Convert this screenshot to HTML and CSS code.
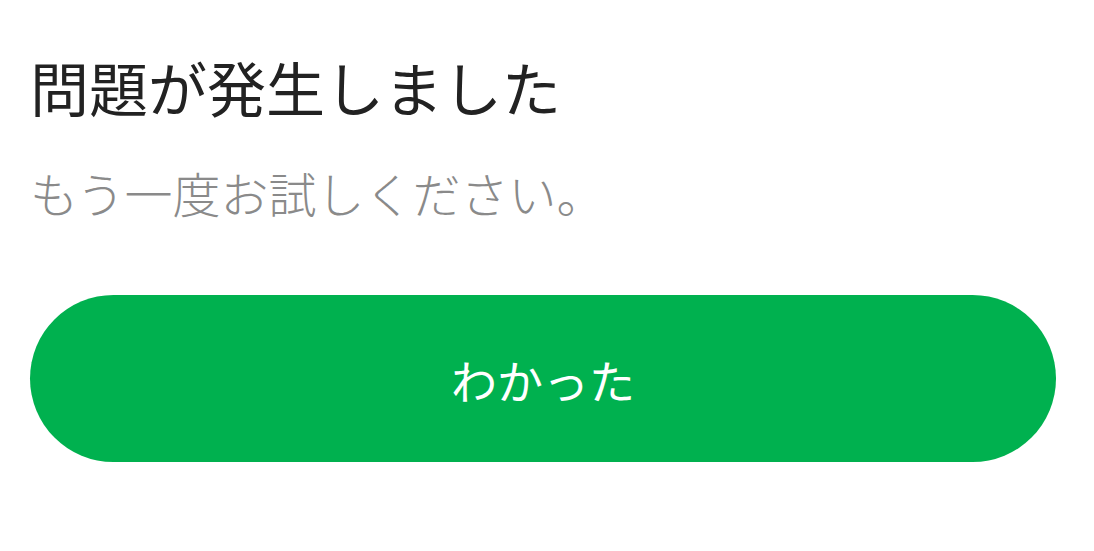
FILE: index.html
```html
<!DOCTYPE html>
<html lang="ja">
<head>
<meta charset="utf-8">
<link rel="stylesheet" href="styles.css">
</head>
<body>
<div class="dialog">
  <h1 class="title">問題が発生しました</h1>
  <p class="message">もう一度お試しください。</p>
  <button class="ok">わかった</button>
</div>
</body>
</html>
```
FILE: styles.css
```css
html, body {
  margin: 0;
  padding: 0;
  background: #ffffff;
}
body {
  font-family: "Noto Sans CJK JP", "Noto Sans", sans-serif;
}
.dialog {
  padding: 57px 38px 0 30px;
  display: flex;
  flex-direction: column;
}
.title {
  margin: 0;
  font-size: 59px;
  line-height: 59px;
  font-weight: 400;
  color: #222222;
}
.message {
  margin: 52px 0 0 0;
  font-size: 48px;
  line-height: 48px;
  font-weight: 300;
  color: #8a8a8a;
}
.ok {
  margin-top: 79px;
  height: 167px;
  border: none;
  border-radius: 84px;
  background: #00b14f;
  color: #ffffff;
  font-family: inherit;
  font-size: 46px;
  padding: 0;
}
```
